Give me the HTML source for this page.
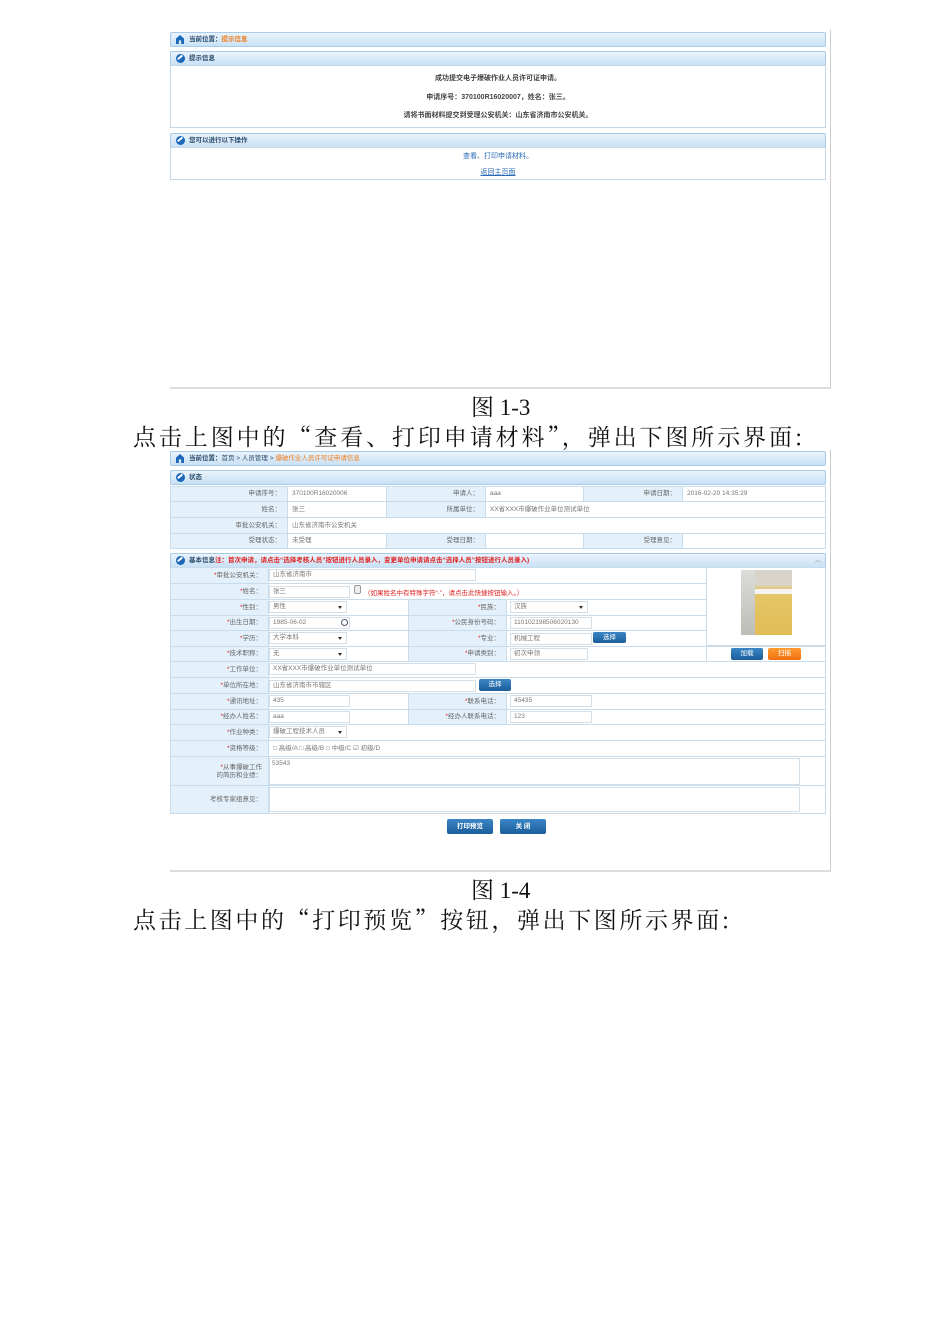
<!DOCTYPE html>
<html><head><meta charset="utf-8"><style>
*{margin:0;padding:0;box-sizing:border-box}
body{width:950px;height:1344px;background:#fff;position:relative;overflow:hidden;font-family:"Liberation Sans","Noto Sans CJK SC",sans-serif;font-size:6.5px;color:#555}
.a{position:absolute;white-space:nowrap}
.bar{position:absolute;left:170px;width:656px;height:15px;background:linear-gradient(#e9f3fc,#c9e1f5);border:1px solid #a9cbe8;border-radius:2px;color:#2a4a6a;font-weight:bold;line-height:13px;padding-left:18px}
.ic{position:absolute;left:5px;top:2px;width:9px;height:9px;border-radius:50%;background:#1b67b8}
.ic:after{content:"";position:absolute;left:2px;top:2px;width:6px;height:3px;border-top:2px solid #fff;transform:rotate(-40deg)}
.hm{position:absolute;left:5px;top:2px;width:8px;height:9px;background:#1b67b8;clip-path:polygon(50% 0,100% 40%,100% 100%,65% 100%,65% 60%,35% 60%,35% 100%,0 100%,0 40%)}
.box{position:absolute;left:170px;width:656px;border:1px solid #c5d9ea;background:#fff}
.lb{position:absolute;background:#e4f1fb;border:1px solid #c9dcec;text-align:right;padding-right:6px;color:#666}
.vl{position:absolute;background:#fff;border:1px solid #c9dcec;padding-left:4px;color:#777}
.in{position:absolute;border:1px solid #d3e0ea;background:#fff;height:12px;line-height:10px;padding-left:3px;color:#777}
.r{color:#e02020}
.btn{position:absolute;background:linear-gradient(#3b86c6,#1a5d99);color:#fff;text-align:center;border-radius:2px;font-weight:bold}
.cap{position:absolute;font-family:"Liberation Serif","Noto Serif CJK SC",serif;color:#111;white-space:nowrap}
.ln{position:absolute;font-family:"Noto Serif CJK SC",serif;color:#111;white-space:nowrap;font-size:23px;line-height:30px}
.sel:after{content:"";position:absolute;right:4px;top:4px;border:2px solid transparent;border-top:3px solid #333}
.m{font-size:7px}
</style></head><body>

<div class="a" style="left:830px;top:30px;width:1px;height:358px;background:#ccc"></div>
<div class="a" style="left:170px;top:387px;width:661px;height:2px;background:#ddd"></div>
<div class="bar" style="top:32px"><span class="hm"></span>当前位置：<span style="color:#f07d1a">提示信息</span></div>
<div class="bar" style="top:51px"><span class="ic"></span>提示信息</div>
<div class="box" style="top:65px;height:63px">
<div class="a m" style="left:0;width:654px;text-align:center;top:7px;font-weight:bold;color:#444">成功提交电子爆破作业人员许可证申请。</div>
<div class="a m" style="left:0;width:654px;text-align:center;top:26px;font-weight:bold;color:#444">申请序号：370100R16020007，姓名：张三。</div>
<div class="a m" style="left:0;width:654px;text-align:center;top:44px;font-weight:bold;color:#444">请将书面材料提交到受理公安机关：山东省济南市公安机关。</div>
</div>
<div class="bar" style="top:133px"><span class="ic"></span>您可以进行以下操作</div>
<div class="box" style="top:147px;height:33px">
<div class="a m" style="left:0;width:654px;text-align:center;top:3px;color:#2a6bb8">查看、打印申请材料。</div>
<div class="a m" style="left:0;width:654px;text-align:center;top:19px;color:#2a6bb8;text-decoration:underline">返回主页面</div>
</div>

<div class="cap" style="left:471px;top:389px;font-size:23px">图 1-3</div>
<div class="ln" style="left:133px;top:421px;letter-spacing:2.9px">点击上图中的“查看、打印申请材料”，弹出下图所示界面:</div>

<div class="a" style="left:830px;top:450px;width:1px;height:422px;background:#ccc"></div>
<div class="a" style="left:170px;top:870px;width:661px;height:2px;background:#ddd"></div>
<div class="bar" style="top:451px"><span class="hm"></span>当前位置：<span style="font-weight:normal">首页 &gt; 人员管理 &gt; </span><span style="color:#f07d1a;font-weight:normal">爆破作业人员许可证申请信息</span></div>
<div class="bar" style="top:470px"><span class="ic"></span>状态</div>

<div class="lb" style="left:170px;top:486px;width:118px;height:16px;line-height:14px">申请序号：</div>
<div class="vl" style="left:287px;top:486px;width:100px;height:16px;line-height:14px">370100R16020006</div>
<div class="lb" style="left:386px;top:486px;width:100px;height:16px;line-height:14px">申请人：</div>
<div class="vl" style="left:485px;top:486px;width:99px;height:16px;line-height:14px">aaa</div>
<div class="lb" style="left:583px;top:486px;width:100px;height:16px;line-height:14px">申请日期：</div>
<div class="vl" style="left:682px;top:486px;width:144px;height:16px;line-height:14px">2016-02-20 14:35:29</div>

<div class="lb" style="left:170px;top:501px;width:118px;height:17px;line-height:15px">姓名：</div>
<div class="vl" style="left:287px;top:501px;width:100px;height:17px;line-height:15px">张三</div>
<div class="lb" style="left:386px;top:501px;width:100px;height:17px;line-height:15px">所属单位：</div>
<div class="vl" style="left:485px;top:501px;width:341px;height:17px;line-height:15px">XX省XXX市爆破作业单位测试单位</div>

<div class="lb" style="left:170px;top:517px;width:118px;height:17px;line-height:15px">审批公安机关：</div>
<div class="vl" style="left:287px;top:517px;width:539px;height:17px;line-height:15px">山东省济南市公安机关</div>

<div class="lb" style="left:170px;top:533px;width:118px;height:16px;line-height:14px">受理状态：</div>
<div class="vl" style="left:287px;top:533px;width:100px;height:16px;line-height:14px">未受理</div>
<div class="lb" style="left:386px;top:533px;width:100px;height:16px;line-height:14px">受理日期：</div>
<div class="vl" style="left:485px;top:533px;width:99px;height:16px;line-height:14px"></div>
<div class="lb" style="left:583px;top:533px;width:100px;height:16px;line-height:14px">受理意见：</div>
<div class="vl" style="left:682px;top:533px;width:144px;height:16px;line-height:14px"></div>

<div class="bar" style="top:553px"><span class="ic"></span>基本信息<span class="r">注：首次申请，请点击“选择考核人员”按钮进行人员录入，变更单位申请请点击“选择人员”按钮进行人员录入)</span><span class="a" style="right:4px;top:0;color:#aaa;font-weight:normal">︽</span></div>

<div class="lb" style="left:170px;top:567px;width:99px;height:17px;line-height:15px"><span class="r">*</span>审批公安机关：</div>
<div class="vl" style="left:268px;top:567px;width:439px;height:17px"></div>
<div class="in" style="left:269px;top:569px;width:207px">山东省济南市</div>

<div class="lb" style="left:170px;top:583px;width:99px;height:17px;line-height:15px"><span class="r">*</span>姓名：</div>
<div class="vl" style="left:268px;top:583px;width:439px;height:17px"></div>
<div class="in" style="left:269px;top:586px;width:81px">张三</div>
<div class="a" style="left:354px;top:585px;width:7px;height:9px;border:1px solid #999;border-radius:2px;background:#eee"></div>
<div class="a r" style="left:364px;top:587px">（如果姓名中有特殊字符“·”，请点击此快捷按钮输入。）</div>

<div class="vl" style="left:706px;top:567px;width:120px;height:79px"></div>
<div class="a" style="left:741px;top:570px;width:51px;height:65px;background:linear-gradient(180deg,#d8d4cc 0,#d8d4cc 22%,#e4c66a 30%,#e2bd55 100%)"></div>
<div class="a" style="left:741px;top:570px;width:14px;height:65px;background:linear-gradient(#dcdcd8,#bdbdb8)"></div>
<div class="a" style="left:755px;top:589px;width:37px;height:5px;background:#f4f4f2"></div>

<div class="lb" style="left:170px;top:599px;width:99px;height:17px;line-height:15px"><span class="r">*</span>性别：</div>
<div class="vl" style="left:268px;top:599px;width:141px;height:17px"></div>
<div class="in sel" style="left:269px;top:601px;width:78px">男性</div>
<div class="lb" style="left:408px;top:599px;width:99px;height:17px;line-height:15px"><span class="r">*</span>民族：</div>
<div class="vl" style="left:506px;top:599px;width:201px;height:17px"></div>
<div class="in sel" style="left:510px;top:601px;width:78px">汉族</div>

<div class="lb" style="left:170px;top:615px;width:99px;height:16px;line-height:14px"><span class="r">*</span>出生日期：</div>
<div class="vl" style="left:268px;top:615px;width:141px;height:16px"></div>
<div class="in" style="left:269px;top:617px;width:81px">1985-06-02</div>
<div class="a" style="left:341px;top:619px;width:7px;height:7px;border:1px solid #557;border-radius:50%"></div>
<div class="lb" style="left:408px;top:615px;width:99px;height:16px;line-height:14px"><span class="r">*</span>公民身份号码：</div>
<div class="vl" style="left:506px;top:615px;width:201px;height:16px"></div>
<div class="in" style="left:510px;top:617px;width:82px">110102198506020130</div>

<div class="lb" style="left:170px;top:630px;width:99px;height:17px;line-height:15px"><span class="r">*</span>学历：</div>
<div class="vl" style="left:268px;top:630px;width:141px;height:17px"></div>
<div class="in sel" style="left:269px;top:632px;width:78px">大学本科</div>
<div class="lb" style="left:408px;top:630px;width:99px;height:17px;line-height:15px"><span class="r">*</span>专业：</div>
<div class="vl" style="left:506px;top:630px;width:201px;height:17px"></div>
<div class="in" style="left:510px;top:633px;width:82px">机械工程</div>
<div class="btn" style="left:593px;top:632px;width:33px;height:11px;line-height:11px;font-weight:normal">选择</div>

<div class="lb" style="left:170px;top:646px;width:99px;height:16px;line-height:14px"><span class="r">*</span>技术职称：</div>
<div class="vl" style="left:268px;top:646px;width:141px;height:16px"></div>
<div class="in sel" style="left:269px;top:648px;width:78px">无</div>
<div class="lb" style="left:408px;top:646px;width:99px;height:16px;line-height:14px"><span class="r">*</span>申请类别：</div>
<div class="vl" style="left:506px;top:646px;width:201px;height:16px"></div>
<div class="in" style="left:510px;top:648px;width:78px">初次申领</div>
<div class="vl" style="left:706px;top:646px;width:120px;height:16px"></div>
<div class="btn" style="left:731px;top:648px;width:32px;height:12px;line-height:12px;font-weight:normal">加载</div>
<div class="btn" style="left:768px;top:648px;width:33px;height:12px;line-height:12px;font-weight:normal;background:linear-gradient(#ff9a30,#f07010)">扫描</div>

<div class="lb" style="left:170px;top:661px;width:99px;height:17px;line-height:15px"><span class="r">*</span>工作单位：</div>
<div class="vl" style="left:268px;top:661px;width:558px;height:17px"></div>
<div class="in" style="left:269px;top:663px;width:207px">XX省XXX市爆破作业单位测试单位</div>

<div class="lb" style="left:170px;top:677px;width:99px;height:17px;line-height:15px"><span class="r">*</span>单位所在地：</div>
<div class="vl" style="left:268px;top:677px;width:558px;height:17px"></div>
<div class="in" style="left:269px;top:680px;width:207px">山东省济南市市辖区</div>
<div class="btn" style="left:479px;top:679px;width:32px;height:12px;line-height:12px;font-weight:normal">选择</div>

<div class="lb" style="left:170px;top:693px;width:99px;height:17px;line-height:15px"><span class="r">*</span>通讯地址：</div>
<div class="vl" style="left:268px;top:693px;width:141px;height:17px"></div>
<div class="in" style="left:269px;top:695px;width:81px">435</div>
<div class="lb" style="left:408px;top:693px;width:99px;height:17px;line-height:15px"><span class="r">*</span>联系电话：</div>
<div class="vl" style="left:506px;top:693px;width:320px;height:17px"></div>
<div class="in" style="left:510px;top:695px;width:82px">45435</div>

<div class="lb" style="left:170px;top:709px;width:99px;height:16px;line-height:14px"><span class="r">*</span>经办人姓名：</div>
<div class="vl" style="left:268px;top:709px;width:141px;height:16px"></div>
<div class="in" style="left:269px;top:711px;width:81px">aaa</div>
<div class="lb" style="left:408px;top:709px;width:99px;height:16px;line-height:14px"><span class="r">*</span>经办人联系电话：</div>
<div class="vl" style="left:506px;top:709px;width:320px;height:16px"></div>
<div class="in" style="left:510px;top:711px;width:82px">123</div>

<div class="lb" style="left:170px;top:724px;width:99px;height:17px;line-height:15px"><span class="r">*</span>作业种类：</div>
<div class="vl" style="left:268px;top:724px;width:558px;height:17px"></div>
<div class="in sel" style="left:269px;top:726px;width:78px">爆破工程技术人员</div>

<div class="lb" style="left:170px;top:740px;width:99px;height:17px;line-height:15px"><span class="r">*</span>资格等级：</div>
<div class="vl" style="left:268px;top:740px;width:558px;height:17px;line-height:15px">□ 高级/A □ 高级/B □ 中级/C ☑ 初级/D</div>

<div class="lb" style="left:170px;top:756px;width:99px;height:30px;line-height:8px;padding-top:7px"><span class="r">*</span>从事爆破工作<br>的简历和业绩：</div>
<div class="vl" style="left:268px;top:756px;width:558px;height:30px"></div>
<div class="a" style="left:269px;top:758px;width:531px;height:27px;border:1px solid #d3e0ea;padding:1px 2px;color:#777">53543</div>

<div class="lb" style="left:170px;top:785px;width:99px;height:29px;line-height:27px">考核专家组意见：</div>
<div class="vl" style="left:268px;top:785px;width:558px;height:29px"></div>
<div class="a" style="left:269px;top:787px;width:531px;height:25px;border:1px solid #d3e0ea"></div>

<div class="btn" style="left:447px;top:819px;width:46px;height:15px;line-height:15px">打印预览</div>
<div class="btn" style="left:500px;top:819px;width:46px;height:15px;line-height:15px">关 闭</div>

<div class="cap" style="left:471px;top:872px;font-size:23px">图 1-4</div>
<div class="ln" style="left:133px;top:904px;letter-spacing:2.6px">点击上图中的“打印预览”按钮，弹出下图所示界面:</div>
</body></html>
